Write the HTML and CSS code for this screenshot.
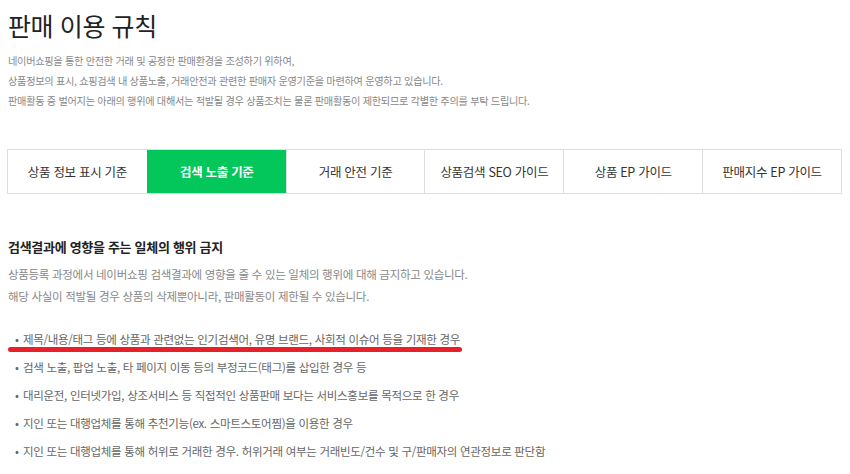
FILE: index.html
```html
<!DOCTYPE html>
<html lang="ko">
<head>
  <meta charset="UTF-8" />
  <meta name="viewport" content="width=device-width, initial-scale=1.0"/>
  <title>판매 이용 규칙</title>
  <link rel="stylesheet" href="styles.css">
</head>
<body>
  <h1 class="title">판매 이용 규칙</h1>

  <div class="intro">
    <p>네이버쇼핑을 통한 안전한 거래 및 공정한 판매환경을 조성하기 위하여,</p>
    <p>상품정보의 표시, 쇼핑검색 내 상품노출, 거래안전과 관련한 판매자 운영기준을 마련하여 운영하고 있습니다.</p>
    <p>판매활동 중 벌어지는 아래의 행위에 대해서는 적발될 경우 상품조치는 물론 판매활동이 제한되므로 각별한 주의를 부탁 드립니다.</p>
  </div>

  <ul class="tabs">
    <li>상품 정보 표시 기준</li>
    <li class="active">검색 노출 기준</li>
    <li>거래 안전 기준</li>
    <li>상품검색 SEO 가이드</li>
    <li>상품 EP 가이드</li>
    <li>판매지수 EP 가이드</li>
  </ul>

  <section class="rule">
    <h2>검색결과에 영향을 주는 일체의 행위 금지</h2>
    <p>상품등록 과정에서 네이버쇼핑 검색결과에 영향을 줄 수 있는 일체의 행위에 대해 금지하고 있습니다.</p>
    <p>해당 사실이 적발될 경우 상품의 삭제뿐아니라, 판매활동이 제한될 수 있습니다.</p>

    <ul class="items">
      <li class="marked">제목/내용/태그 등에 상품과 관련없는 인기검색어, 유명 브랜드, 사회적 이슈어 등을 기재한 경우</li>
      <li>검색 노출, 팝업 노출, 타 페이지 이동 등의 부정코드(태그)를 삽입한 경우 등</li>
      <li>대리운전, 인터넷가입, 상조서비스 등 직접적인 상품판매 보다는 서비스홍보를 목적으로 한 경우</li>
      <li>지인 또는 대행업체를 통해 추천기능(ex. 스마트스토어찜)을 이용한 경우</li>
      <li>지인 또는 대행업체를 통해 허위로 거래한 경우. 허위거래 여부는 거래빈도/건수 및 구/판매자의 연관정보로 판단함</li>
    </ul>
  </section>
</body>
</html>
```

FILE: styles.css
```css
body {
  font-family: "Noto Sans CJK KR", "Noto Sans", sans-serif;
  margin: 0;
  padding: 0 8px;
  background: #fff;
  color: #333;
}

p, ul, h1, h2 {
  margin: 0;
}

.title {
  font-size: 25px;
  font-weight: 400;
  color: #222;
  line-height: 30px;
  padding-top: 10px;
  letter-spacing: -0.4px;
}

.intro {
  margin-top: 11px;
  font-size: 10.2px;
  line-height: 20px;
  color: #888;
  letter-spacing: -0.3px;
}

.tabs {
  list-style: none;
  padding: 0;
  margin: 38px 0 0 -1px;
  display: grid;
  grid-template-columns: repeat(6, 1fr);
  width: 835px;
  border: 1px solid #ddd;
  box-sizing: border-box;
}

.tabs li {
  height: 43px;
  display: flex;
  align-items: center;
  justify-content: center;
  font-size: 12.5px;
  color: #333;
  border-left: 1px solid #ddd;
  letter-spacing: -0.3px;
}

.tabs li:first-child {
  border-left: none;
}

.tabs li.active {
  background: #03c75a;
  border-left-color: #03c75a;
  color: #fff;
  font-weight: 700;
}

.rule {
  margin-top: 41px;
}

.rule h2 {
  font-size: 13px;
  font-weight: 700;
  color: #222;
  line-height: 24px;
  letter-spacing: -0.3px;
}

.rule p {
  font-size: 11.5px;
  line-height: 22px;
  color: #888;
  letter-spacing: -0.3px;
}

.rule h2 + p {
  margin-top: 4px;
}

.items {
  list-style: none;
  padding: 0 0 0 7px;
  margin-top: 18px;
}

.items li {
  position: relative;
  font-size: 11.5px;
  line-height: 28px;
  color: #666;
  letter-spacing: -0.3px;
  padding-left: 8px;
}

.items li::before {
  content: "•";
  position: absolute;
  left: 0;
  color: #666;
}

.items li.marked::after {
  content: "";
  position: absolute;
  left: -7px;
  top: 22px;
  width: 454px;
  height: 5px;
  border-radius: 3px;
  background: #e8202a;
}
```
